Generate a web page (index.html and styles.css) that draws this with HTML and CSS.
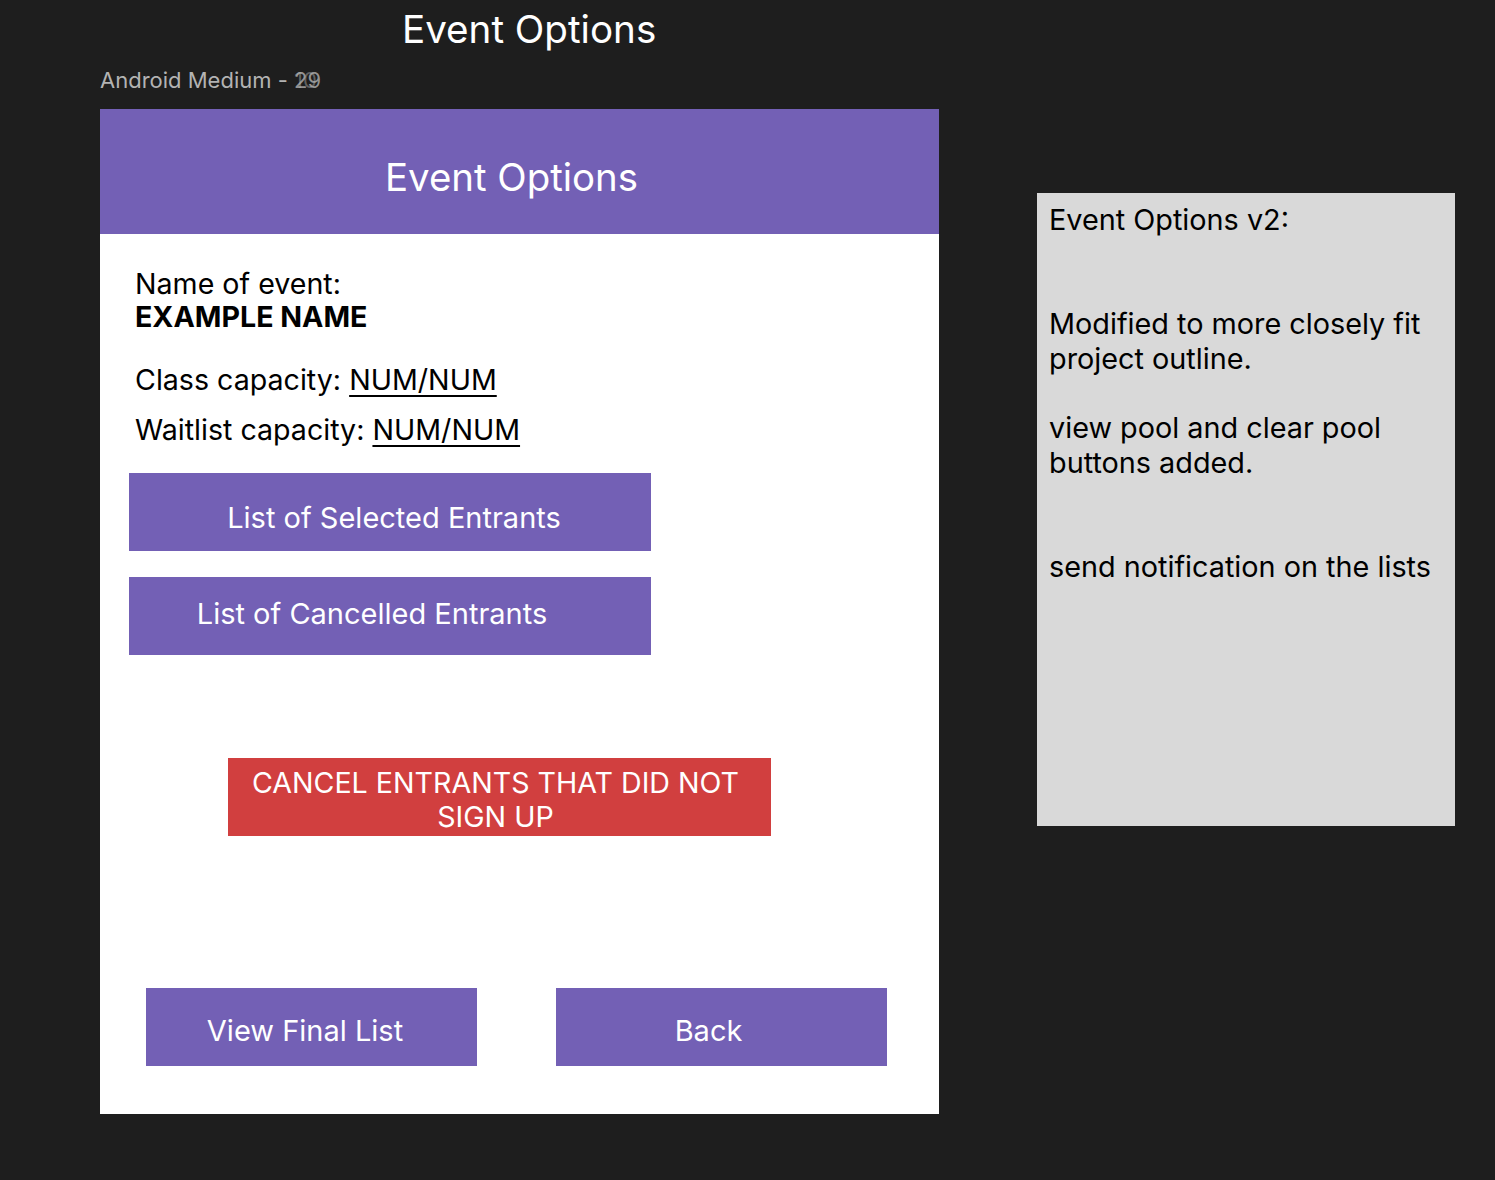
FILE: index.html
```html
<!DOCTYPE html>
<html>
<head>
<meta charset="utf-8">
<link rel="stylesheet" href="styles.css">
</head>
<body>
<div class="canvas">
  <div class="left">
    <div class="page-title">Event Options</div>
    <div class="frame-label">Android Medium - <span class="num">29</span></div>
    <div class="frame">
      <div class="header">Event Options</div>
      <div class="content">
        <div class="name-label">Name of event:</div>
        <div class="name-value">EXAMPLE NAME</div>
        <div class="cap cap-class">Class capacity: <span class="u">NUM/NUM</span></div>
        <div class="cap cap-wait">Waitlist capacity: <span class="u">NUM/NUM</span></div>
        <div class="btn btn-list btn-sel"><span>List of Selected Entrants</span></div>
        <div class="btn btn-list btn-can"><span>List of Cancelled Entrants</span></div>
        <div class="btn btn-red">CANCEL ENTRANTS THAT DID NOT<br>SIGN UP</div>
        <div class="bottom">
          <div class="btn btn-bottom btn-final"><span>View Final List</span></div>
          <div class="btn btn-bottom btn-back"><span>Back</span></div>
        </div>
      </div>
    </div>
  </div>
  <div class="note">Event Options v2:


Modified to more closely fit
project outline.

view pool and clear pool
buttons added.


send notification on the lists</div>
</div>
</body>
</html>
```
FILE: styles.css
```css
html, body {
  margin: 0;
  padding: 0;
  background: #1e1e1e;
  font-family: Inter, "Noto Sans", sans-serif;
}
.canvas {
  display: flex;
  align-items: flex-start;
  padding-left: 100px;
  gap: 98px;
  height: 1180px;
  box-sizing: border-box;
}
.left {
  width: 839px;
  display: flex;
  flex-direction: column;
}
.page-title {
  color: #ffffff;
  font-size: 38.6px;
  line-height: 45px;
  margin-top: 7px;
  padding-left: 302px;
}
.frame-label {
  color: #b3b3b3;
  font-size: 22px;
  line-height: 26px;
  margin-top: 15px;
  height: 42px;
}
.num {
  position: relative;
  display: inline-block;
  color: rgba(179, 179, 179, 0.8);
}
.num::after {
  content: "10";
  position: absolute;
  left: 0;
  top: 0;
  color: rgba(179, 179, 179, 0.45);
}
.frame {
  width: 839px;
  height: 1005px;
  background: #ffffff;
  display: flex;
  flex-direction: column;
}
.header {
  height: 125px;
  background: #7360b5;
  color: #ffffff;
  font-size: 38.4px;
  display: flex;
  align-items: center;
  justify-content: center;
  padding-right: 16px;
  padding-top: 10px;
  box-sizing: border-box;
}
.content {
  display: flex;
  flex-direction: column;
  align-items: flex-start;
  padding: 33px 0 0 0;
  color: #000;
  font-size: 28.6px;
  line-height: 34px;
}
.name-label { margin-left: 35px; height: 34px; }
.name-value { margin-left: 35px; font-weight: 700; height: 34px; margin-top: -1px; }
.cap { margin-left: 35px; height: 34px; }
.cap-class { margin-top: 29px; }
.cap-wait { margin-top: 16px; }
.u {
  text-decoration: underline;
  text-decoration-thickness: 2px;
  text-underline-offset: 5px;
}
.btn {
  background: #7360b5;
  color: #ffffff;
  font-size: 29px;
  display: flex;
  align-items: center;
  justify-content: center;
  box-sizing: border-box;
}
.btn-list {
  margin-left: 29px;
  width: 522px;
  height: 78px;
}
.btn-sel { margin-top: 26px; padding-left: 8px; padding-top: 11px; }
.btn-can { margin-top: 26px; padding-right: 36px; padding-bottom: 5px; }
.btn-red {
  margin-top: 103px;
  margin-left: 128px;
  width: 543px;
  height: 78px;
  background: #d13f3f;
  font-size: 28.6px;
  text-align: center;
  line-height: 34.5px;
  padding-right: 8px;
  padding-top: 6px;
}
.bottom {
  margin-top: 152px;
  margin-left: 46px;
  display: flex;
  gap: 79px;
}
.btn-bottom {
  width: 331px;
  height: 78px;
  padding-top: 7px;
}
.btn-final { padding-right: 13px; }
.btn-back { padding-right: 26px; }
.note {
  margin-top: 193px;
  width: 418px;
  height: 633px;
  background: #d9d9d9;
  color: #000;
  font-size: 28.8px;
  line-height: 34.7px;
  white-space: pre-wrap;
  padding: 10px 0 0 12px;
  box-sizing: border-box;
}
```
